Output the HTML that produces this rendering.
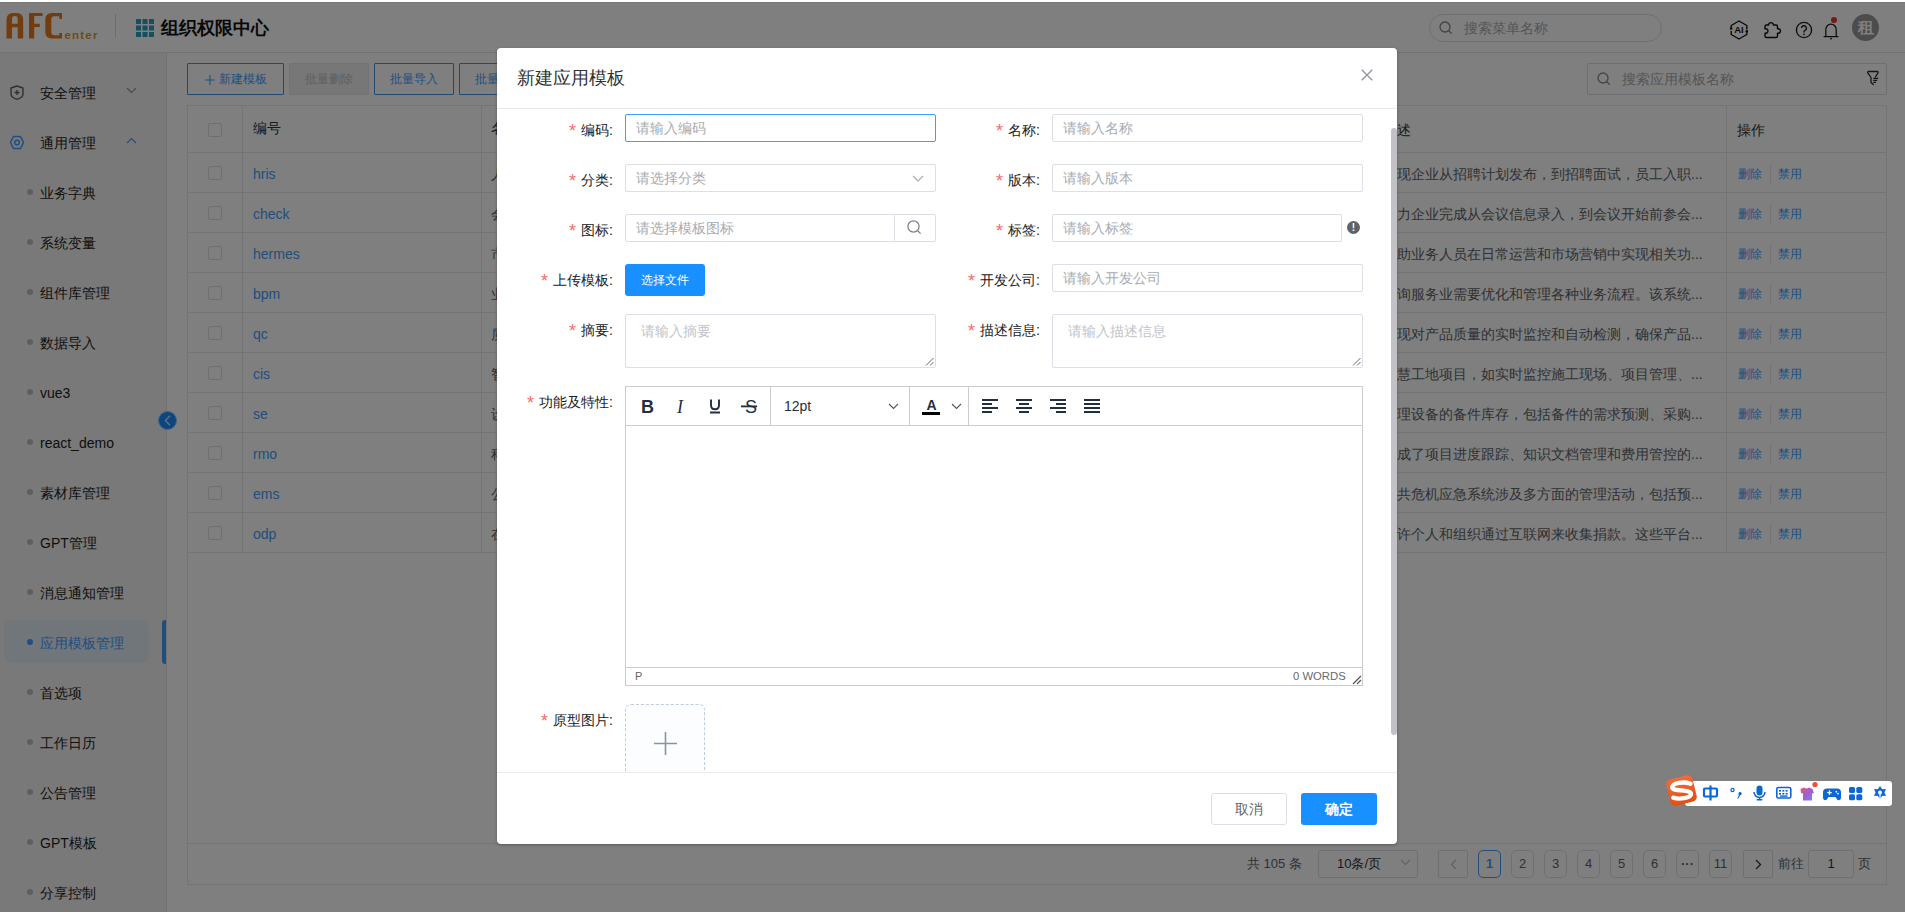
<!DOCTYPE html>
<html><head><meta charset="utf-8">
<style>
*{box-sizing:border-box;margin:0;padding:0}
html,body{width:1905px;height:912px;overflow:hidden;background:#fff}
body{position:relative;font-family:"Liberation Sans",sans-serif;font-size:14px;color:#303133}
.a{position:absolute}
.t{position:absolute;white-space:nowrap;line-height:20px}
.hdr{left:0;top:2px;width:1905px;height:51px;background:#fff;border-top:1px solid #f0f0f0;border-bottom:1px solid #e4e4e4}
.side{left:0;top:53px;width:167px;height:859px;background:#f3f3f3;border-right:1px solid #e0e0e0}
.content{left:167px;top:53px;width:1738px;height:859px;background:#fff}
.btn-o{position:absolute;height:32px;border:1px solid #3a96f2;border-radius:1px;color:#409eff;font-size:12px;line-height:30px;text-align:center;background:#fff}
.sub{position:absolute;left:40px;font-size:14px;line-height:20px;color:#1d1e20;white-space:nowrap}
.dot{position:absolute;left:27px;width:6px;height:6px;border-radius:50%;background:#b8bcc2}
.tbl{left:187px;top:105px;width:1700px;height:739px;border:1px solid #e8e8e8;border-bottom:none}
.row{position:absolute;left:187px;width:1700px;height:40px;border-bottom:1px solid #e8e8e8;border-left:1px solid #e8e8e8;border-right:1px solid #e8e8e8}
.cb{position:absolute;left:208px;width:14px;height:14px;border:1px solid #dcdfe6;border-radius:2px;background:#fff}
.code{position:absolute;left:253px;color:#409eff;font-size:14px;line-height:20px;white-space:nowrap}
.nm{position:absolute;left:491px;color:#606266;font-size:14px;line-height:20px;white-space:nowrap}
.desc{position:absolute;left:1397px;color:#606266;font-size:14px;line-height:20px;white-space:nowrap}
.op{position:absolute;color:#409eff;font-size:12px;line-height:20px;white-space:nowrap}
.opd{position:absolute;left:1770px;width:1px;height:19px;background:#e8e8e8}
.pg{position:absolute;top:850px;height:28px;width:23px;border:1px solid #dcdfe6;border-radius:5px;text-align:center;line-height:26px;font-size:13px;color:#606266;background:#fff}
.mask{left:0;top:2px;width:1905px;height:910px;background:rgba(0,0,0,.5)}

.lbl{position:absolute;height:32px;line-height:32px;text-align:right;font-size:14px;color:#202124;white-space:nowrap}
.lbl i{font-style:normal;color:#f56c6c;margin-right:4px;display:inline-block;font-size:18px;vertical-align:top;height:32px;line-height:32px;position:relative;top:1px;left:-1px}
.inp{position:absolute;height:28px;border:1px solid #dcdfe6;border-radius:2px;background:#fff}
.inp span{position:absolute;left:10px;top:3px;line-height:20px;font-size:14px;color:#a8abb2;white-space:nowrap}
.ta{position:absolute;height:54px;border:1px solid #dcdfe6;border-radius:2px;background:#fff}
.ta span{position:absolute;left:15px;top:6px;line-height:20px;font-size:14px;color:#c0c4cc;white-space:nowrap}
</style></head><body>

<!-- ===== HEADER ===== -->
<div class="a hdr"></div>
<svg class="a" style="left:0;top:0" width="110" height="50" viewBox="0 0 110 50">
  <path d="M6.5 38.5V20Q6.5 13 13 13H16.7Q23.2 13 23.2 20V38.5H17.7V27.2H12V38.5Z M12 23.8H17.7V19.2Q17.7 16 14.85 16Q12 16 12 19.2Z" fill="#e7791c" fill-rule="evenodd"/>
  <path d="M29 38.5V13H42.6V15.9H34.2V23.8H39.8V27H34.2V38.5Z" fill="#e7791c"/>
  <path d="M62 13V19H59.3V16.3H54.5Q51.3 16.3 51.3 19.5V32Q51.3 35.2 54.5 35.2H59.3V33H62V38.5H52Q45.3 38.5 45.3 31.8V19.7Q45.3 13 52 13Z" fill="#e7791c"/>
  <text x="64.5" y="38.5" font-family="Liberation Sans" font-weight="bold" font-size="11.5" fill="#d89a1e" letter-spacing="1.2">enter</text>
</svg>
<div class="a" style="left:115px;top:14px;width:1px;height:23px;background:#d9d9d9"></div>
<svg class="a" style="left:136px;top:19px" width="18" height="18">
  <g fill="#2a9fc0">
  <rect x="0" y="0" width="5" height="5"/><rect x="6.5" y="0" width="5" height="5"/><rect x="13" y="0" width="5" height="5"/>
  <rect x="0" y="6.5" width="5" height="5"/><rect x="6.5" y="6.5" width="5" height="5"/><rect x="13" y="6.5" width="5" height="5"/>
  <rect x="0" y="13" width="5" height="5"/><rect x="6.5" y="13" width="5" height="5"/><rect x="13" y="13" width="5" height="5"/>
  </g>
</svg>
<div class="t" style="left:161px;top:17.5px;font-size:18px;font-weight:bold;color:#111">组织权限中心</div>

<div class="a" style="left:1429px;top:14px;width:233px;height:28px;border:1px solid #dcdfe6;border-radius:14px;background:#fff"></div>
<svg class="a" style="left:1439px;top:21px" width="14" height="14" viewBox="0 0 14 14"><circle cx="6" cy="6" r="5" fill="none" stroke="#888" stroke-width="1.3"/><path d="M9.7 9.7L12.6 12.6" stroke="#888" stroke-width="1.4"/></svg>
<div class="t" style="left:1464px;top:18px;color:#a8abb2">搜索菜单名称</div>

<svg class="a" style="left:1729px;top:20px" width="20" height="20" viewBox="0 0 20 20">
  <path d="M2.2 8.5V5.5L10 1L17.8 5.5V9.5M17.8 12.5V14.5L10 19L2.2 14.5V11" fill="none" stroke="#111" stroke-width="1.4" stroke-linejoin="round"/>
  <circle cx="2.2" cy="8.6" r="1.3" fill="#111"/><circle cx="17.8" cy="11.4" r="1.3" fill="#111"/>
  <text x="10" y="13.2" text-anchor="middle" font-family="Liberation Sans" font-weight="bold" font-size="9.5" fill="#111">AI</text>
</svg>
<svg class="a" style="left:1762px;top:18px" width="22" height="22" viewBox="0 0 22 22">
  <path d="M3 8.5Q3 7 4.5 7H6.6A2.4 2.4 0 1 1 11.4 7H14Q15.5 7 15.5 8.5V10.8A2.3 2.3 0 1 1 15.5 15.2V18Q15.5 19.5 14 19.5H4.5Q3 19.5 3 18V15.2A2.3 2.3 0 1 0 3 10.8Z" fill="none" stroke="#111" stroke-width="1.4" stroke-linejoin="round"/>
</svg>
<svg class="a" style="left:1795px;top:21px" width="18" height="18" viewBox="0 0 18 18">
  <circle cx="9" cy="9" r="7.6" fill="none" stroke="#222" stroke-width="1.4"/>
  <path d="M6.6 7.1a2.4 2.4 0 1 1 3.4 2.2c-.7.35-1 .8-1 1.5v.6" fill="none" stroke="#222" stroke-width="1.4"/>
  <circle cx="9" cy="13.3" r=".9" fill="#222"/>
</svg>
<svg class="a" style="left:1822px;top:20px;overflow:visible" width="18" height="20" viewBox="0 0 18 20">
  <path d="M3.8 16.6V9.4a5.2 5.2 0 0 1 10.4 0V16.6" fill="none" stroke="#111" stroke-width="1.2"/>
  <path d="M1.6 16.6H16.4" stroke="#111" stroke-width="1.2"/>
  <circle cx="9" cy="18.6" r=".9" fill="#111"/>
  <circle cx="12" cy="0" r="3" fill="#e53935"/>
</svg>
<div class="a" style="left:1852px;top:14px;width:27px;height:27px;border-radius:50%;background:#999;color:#fff;font-family:'Liberation Serif',serif;font-size:16px;font-weight:bold;line-height:27px;text-align:center">租</div>

<!-- ===== SIDEBAR ===== -->
<div class="a side"></div>
<svg class="a" style="left:10px;top:85px" width="14" height="15" viewBox="0 0 14 15">
  <path d="M7 1L13 3V9Q13 12.5 7 14.3Q1 12.5 1 9V3Z" fill="none" stroke="#606266" stroke-width="1.4" stroke-linejoin="round"/>
  <path d="M7 5V10M4.5 7.5H9.5" stroke="#606266" stroke-width="1.4"/>
</svg>
<div class="sub" style="top:83px">安全管理</div>
<svg class="a" style="left:126px;top:87px" width="11" height="7" viewBox="0 0 11 7"><path d="M1 1L5.5 5.5L10 1" fill="none" stroke="#909399" stroke-width="1.2"/></svg>
<svg class="a" style="left:10px;top:135px" width="14" height="15" viewBox="0 0 14 15">
  <path d="M3.5 1.5H10.5L13.5 7.5L10.5 13.5H3.5L0.5 7.5Z" fill="none" stroke="#409eff" stroke-width="1.5" stroke-linejoin="round"/>
  <circle cx="7" cy="7.5" r="2.3" fill="none" stroke="#409eff" stroke-width="1.5"/>
</svg>
<div class="sub" style="top:133px">通用管理</div>
<svg class="a" style="left:126px;top:137px" width="11" height="7" viewBox="0 0 11 7"><path d="M1 6L5.5 1.5L10 6" fill="none" stroke="#409eff" stroke-width="1.2"/></svg>

<div class="dot" style="top:189px"></div><div class="sub" style="top:183px">业务字典</div>
<div class="dot" style="top:239px"></div><div class="sub" style="top:233px">系统变量</div>
<div class="dot" style="top:289px"></div><div class="sub" style="top:283px">组件库管理</div>
<div class="dot" style="top:339px"></div><div class="sub" style="top:333px">数据导入</div>
<div class="dot" style="top:389px"></div><div class="sub" style="top:383px">vue3</div>
<div class="dot" style="top:439px"></div><div class="sub" style="top:433px">react_demo</div>
<div class="dot" style="top:489px"></div><div class="sub" style="top:483px">素材库管理</div>
<div class="dot" style="top:539px"></div><div class="sub" style="top:533px">GPT管理</div>
<div class="dot" style="top:589px"></div><div class="sub" style="top:583px">消息通知管理</div>
<div class="a" style="left:4px;top:620px;width:145px;height:43px;border-radius:6px;background:#e3ecf7"></div>
<div class="dot" style="top:639px;background:#409eff"></div><div class="sub" style="top:633px;color:#409eff">应用模板管理</div>
<div class="a" style="left:162px;top:620px;width:4px;height:44px;border-radius:3px 0 0 3px;background:#409eff"></div>
<div class="dot" style="top:689px"></div><div class="sub" style="top:683px">首选项</div>
<div class="dot" style="top:739px"></div><div class="sub" style="top:733px">工作日历</div>
<div class="dot" style="top:789px"></div><div class="sub" style="top:783px">公告管理</div>
<div class="dot" style="top:839px"></div><div class="sub" style="top:833px">GPT模板</div>
<div class="dot" style="top:889px"></div><div class="sub" style="top:883px">分享控制</div>

<!-- ===== CONTENT ===== -->
<div class="a content"></div>
<div class="btn-o" style="left:187px;top:63px;width:97px;padding-left:14px">新建模板<svg class="a" style="left:17px;top:11px" width="10" height="10" viewBox="0 0 10 10"><path d="M5 0V10M0 5H10" stroke="#409eff" stroke-width="1.1"/></svg></div>
<div class="a" style="left:289px;top:63px;width:80px;height:32px;border-radius:1px;background:#eeeeee;border:1px solid #e6e6e6;color:#bdbdbd;font-size:12px;line-height:30px;text-align:center">批量删除</div>
<div class="btn-o" style="left:374px;top:63px;width:80px">批量导入</div>
<div class="btn-o" style="left:459px;top:63px;width:80px">批量导出</div>

<div class="a" style="left:1587px;top:63px;width:300px;height:32px;border:1px solid #dcdfe6;border-radius:2px;background:#fff"></div>
<svg class="a" style="left:1597px;top:72px" width="14" height="14" viewBox="0 0 14 14"><circle cx="6" cy="6" r="5" fill="none" stroke="#888" stroke-width="1.3"/><path d="M9.7 9.7L12.6 12.6" stroke="#888" stroke-width="1.4"/></svg>
<div class="t" style="left:1622px;top:69px;color:#a8abb2">搜索应用模板名称</div>
<svg class="a" style="left:1866px;top:70px" width="14" height="16" viewBox="0 0 14 16"><path d="M5 12.5V7.5L1.8 2.8Q1.3 1.5 2.6 1.5H11.2Q12.5 1.5 12 2.8L9.4 7M5 12.5L7.3 14.6" fill="none" stroke="#2a2a2a" stroke-width="1.3" stroke-linejoin="round" stroke-linecap="round"/><path d="M7.3 8.4H12.3M7.3 10.4H11.2M7.3 12.4H10" stroke="#2a2a2a" stroke-width="1.2"/></svg>

<div class="a tbl"></div>
<div class="row" style="top:105px;height:48px;border-top:1px solid #e8e8e8;border-right:1px solid #e8e8e8;border-left:1px solid #e8e8e8"></div>
<div class="a" style="left:242px;top:105px;width:1px;height:448px;background:#e8e8e8"></div>
<div class="a" style="left:481px;top:105px;width:1px;height:448px;background:#e8e8e8"></div>
<div class="a" style="left:1726px;top:105px;width:1px;height:448px;background:#e8e8e8"></div>
<div class="cb" style="top:123px"></div>
<div class="t" style="left:253px;top:118px;color:#303133">编号</div>
<div class="t" style="left:491px;top:118px;color:#303133">名称</div>
<div class="t" style="left:1737px;top:120px;color:#303133">操作</div>
<div class="t" style="left:1383px;top:120px;color:#303133">描述</div>

<div class="row" style="top:153px"></div>
<div class="cb" style="top:166px"></div>
<div class="code" style="top:164px">hris</div>
<div class="nm" style="top:164px">人力资源</div>
<div class="desc" style="top:164px">现企业从招聘计划发布，到招聘面试，员工入职...</div>
<div class="op" style="left:1738px;top:164px">删除</div><div class="opd" style="top:164px"></div><div class="op" style="left:1778px;top:164px">禁用</div>
<div class="row" style="top:193px"></div>
<div class="cb" style="top:206px"></div>
<div class="code" style="top:204px">check</div>
<div class="nm" style="top:204px">会议管理</div>
<div class="desc" style="top:204px">力企业完成从会议信息录入，到会议开始前参会...</div>
<div class="op" style="left:1738px;top:204px">删除</div><div class="opd" style="top:204px"></div><div class="op" style="left:1778px;top:204px">禁用</div>
<div class="row" style="top:233px"></div>
<div class="cb" style="top:246px"></div>
<div class="code" style="top:244px">hermes</div>
<div class="nm" style="top:244px">市场营销</div>
<div class="desc" style="top:244px">助业务人员在日常运营和市场营销中实现相关功...</div>
<div class="op" style="left:1738px;top:244px">删除</div><div class="opd" style="top:244px"></div><div class="op" style="left:1778px;top:244px">禁用</div>
<div class="row" style="top:273px"></div>
<div class="cb" style="top:286px"></div>
<div class="code" style="top:284px">bpm</div>
<div class="nm" style="top:284px">业务流程</div>
<div class="desc" style="top:284px">询服务业需要优化和管理各种业务流程。该系统...</div>
<div class="op" style="left:1738px;top:284px">删除</div><div class="opd" style="top:284px"></div><div class="op" style="left:1778px;top:284px">禁用</div>
<div class="row" style="top:313px"></div>
<div class="cb" style="top:326px"></div>
<div class="code" style="top:324px">qc</div>
<div class="nm" style="top:324px">质量管理</div>
<div class="desc" style="top:324px">现对产品质量的实时监控和自动检测，确保产品...</div>
<div class="op" style="left:1738px;top:324px">删除</div><div class="opd" style="top:324px"></div><div class="op" style="left:1778px;top:324px">禁用</div>
<div class="row" style="top:353px"></div>
<div class="cb" style="top:366px"></div>
<div class="code" style="top:364px">cis</div>
<div class="nm" style="top:364px">智慧工地</div>
<div class="desc" style="top:364px">慧工地项目，如实时监控施工现场、项目管理、...</div>
<div class="op" style="left:1738px;top:364px">删除</div><div class="opd" style="top:364px"></div><div class="op" style="left:1778px;top:364px">禁用</div>
<div class="row" style="top:393px"></div>
<div class="cb" style="top:406px"></div>
<div class="code" style="top:404px">se</div>
<div class="nm" style="top:404px">设备备件</div>
<div class="desc" style="top:404px">理设备的备件库存，包括备件的需求预测、采购...</div>
<div class="op" style="left:1738px;top:404px">删除</div><div class="opd" style="top:404px"></div><div class="op" style="left:1778px;top:404px">禁用</div>
<div class="row" style="top:433px"></div>
<div class="cb" style="top:446px"></div>
<div class="code" style="top:444px">rmo</div>
<div class="nm" style="top:444px">科研项目</div>
<div class="desc" style="top:444px">成了项目进度跟踪、知识文档管理和费用管控的...</div>
<div class="op" style="left:1738px;top:444px">删除</div><div class="opd" style="top:444px"></div><div class="op" style="left:1778px;top:444px">禁用</div>
<div class="row" style="top:473px"></div>
<div class="cb" style="top:486px"></div>
<div class="code" style="top:484px">ems</div>
<div class="nm" style="top:484px">公共应急</div>
<div class="desc" style="top:484px">共危机应急系统涉及多方面的管理活动，包括预...</div>
<div class="op" style="left:1738px;top:484px">删除</div><div class="opd" style="top:484px"></div><div class="op" style="left:1778px;top:484px">禁用</div>
<div class="row" style="top:513px"></div>
<div class="cb" style="top:526px"></div>
<div class="code" style="top:524px">odp</div>
<div class="nm" style="top:524px">在线募捐</div>
<div class="desc" style="top:524px">许个人和组织通过互联网来收集捐款。这些平台...</div>
<div class="op" style="left:1738px;top:524px">删除</div><div class="opd" style="top:524px"></div><div class="op" style="left:1778px;top:524px">禁用</div>

<div class="a" style="left:187px;top:843px;width:1700px;height:42px;border:1px solid #e8e8e8;background:#fff"></div>
<div class="t" style="left:1247px;top:854px;font-size:13px;color:#606266">共 105 条</div>
<div class="a" style="left:1318px;top:850px;width:100px;height:28px;border:1px solid #dcdfe6;border-radius:3px;background:#fff"></div>
<div class="t" style="left:1337px;top:854px;font-size:13px;color:#303133">10条/页</div>
<svg class="a" style="left:1400px;top:859px" width="11" height="7" viewBox="0 0 11 7"><path d="M1 1L5.5 5.5L10 1" fill="none" stroke="#c0c4cc" stroke-width="1.2"/></svg>
<div class="pg" style="left:1438px;width:30px;border-radius:2px"><svg class="a" style="left:11px;top:8px" width="7" height="11" viewBox="0 0 7 11"><path d="M6 1L1.5 5.5L6 10" fill="none" stroke="#c0c4cc" stroke-width="1.3"/></svg></div>
<div class="pg" style="left:1478px;border-color:#409eff;color:#409eff;font-weight:bold">1</div>
<div class="pg" style="left:1511px">2</div>
<div class="pg" style="left:1544px">3</div>
<div class="pg" style="left:1577px">4</div>
<div class="pg" style="left:1610px">5</div>
<div class="pg" style="left:1643px">6</div>
<div class="pg" style="left:1676px;font-weight:bold">···</div>
<div class="pg" style="left:1709px">11</div>
<div class="pg" style="left:1743px;width:30px;border-radius:2px"><svg class="a" style="left:11px;top:8px" width="7" height="11" viewBox="0 0 7 11"><path d="M1 1L5.5 5.5L1 10" fill="none" stroke="#303133" stroke-width="1.3"/></svg></div>
<div class="t" style="left:1778px;top:854px;font-size:13px;color:#606266">前往</div>
<div class="a" style="left:1808px;top:850px;width:46px;height:28px;border:1px solid #dcdfe6;border-radius:3px;background:#fff;text-align:center;line-height:26px;font-size:13px;color:#303133">1</div>
<div class="t" style="left:1858px;top:854px;font-size:13px;color:#606266">页</div>

<div class="a" style="left:158px;top:411px;width:19px;height:19px;border-radius:50%;background:#1a8cff;border:1px solid #8cc4ff"></div>
<svg class="a" style="left:162.5px;top:413.5px" width="10" height="13" viewBox="0 0 10 13"><path d="M7 1.8L2.4 6.5L7 11.2" fill="none" stroke="#bcdcff" stroke-width="1.5"/></svg>
<!-- ===== MASK ===== -->
<div class="a mask"></div>

<!-- ===== MODAL ===== -->

<div class="a" style="left:497px;top:48px;width:900px;height:796px;background:#fff;border-radius:4px;box-shadow:0 1px 3px rgba(0,0,0,.3)">
  <div class="t" style="left:20px;top:17.5px;font-size:18px;line-height:24px;color:#303133">新建应用模板</div>
  <svg class="a" style="left:864px;top:21px" width="12" height="12" viewBox="0 0 12 12"><path d="M0.7 0.7L11.3 11.3M11.3 0.7L0.7 11.3" stroke="#909399" stroke-width="1.3"/></svg>
  <div class="a" style="left:0;top:60px;width:900px;height:1px;background:#e8e8e8"></div>

  <div class="a" id="mbody" style="left:0;top:61px;width:900px;height:663px;overflow:hidden">
    <!-- coordinates inside body: x-497, y-109 -->
    <!-- row1 -->
    <div class="lbl" style="left:0;top:5px;width:116px"><i>*</i>编码:</div>
    <div class="inp" style="left:128px;top:5px;width:311px;border-color:#409eff"><span>请输入编码</span></div>
    <div class="lbl" style="left:427px;top:5px;width:116px"><i>*</i>名称:</div>
    <div class="inp" style="left:555px;top:5px;width:311px"><span>请输入名称</span></div>
    <!-- row2 -->
    <div class="lbl" style="left:0;top:55px;width:116px"><i>*</i>分类:</div>
    <div class="inp" style="left:128px;top:55px;width:311px"><span>请选择分类</span></div>
    <svg class="a" style="left:415px;top:66px" width="12" height="7" viewBox="0 0 12 7"><path d="M1 1L6 6L11 1" fill="none" stroke="#a8abb2" stroke-width="1.2"/></svg>
    <div class="lbl" style="left:427px;top:55px;width:116px"><i>*</i>版本:</div>
    <div class="inp" style="left:555px;top:55px;width:311px"><span>请输入版本</span></div>
    <!-- row3 -->
    <div class="lbl" style="left:0;top:105px;width:116px"><i>*</i>图标:</div>
    <div class="inp" style="left:128px;top:105px;width:311px"><span>请选择模板图标</span></div>
    <div class="a" style="left:397px;top:105px;width:1px;height:28px;background:#dcdfe6"></div>
    <svg class="a" style="left:410px;top:111px" width="15" height="15" viewBox="0 0 15 15"><circle cx="6.5" cy="6.5" r="5.6" fill="none" stroke="#7a7d84" stroke-width="1.2"/><path d="M10.6 10.6L13.6 13.6" stroke="#7a7d84" stroke-width="1.3"/></svg>
    <div class="lbl" style="left:427px;top:105px;width:116px"><i>*</i>标签:</div>
    <div class="inp" style="left:555px;top:105px;width:290px"><span>请输入标签</span></div>
    <div class="a" style="left:850px;top:112px;width:13px;height:13px;border-radius:50%;background:#606266;color:#fff;font-size:10px;font-weight:bold;line-height:13px;text-align:center">!</div>
    <!-- row4 -->
    <div class="lbl" style="left:0;top:155px;width:116px"><i>*</i>上传模板:</div>
    <div class="a" style="left:128px;top:155px;width:80px;height:32px;border-radius:3px;background:#1890ff;color:#fff;font-size:12px;line-height:32px;text-align:center">选择文件</div>
    <div class="lbl" style="left:427px;top:155px;width:116px"><i>*</i>开发公司:</div>
    <div class="inp" style="left:555px;top:155px;width:311px"><span>请输入开发公司</span></div>
    <!-- row5 -->
    <div class="lbl" style="left:0;top:205px;width:116px"><i>*</i>摘要:</div>
    <div class="ta" style="left:128px;top:205px;width:311px"><span>请输入摘要</span><svg class="a" style="right:1px;bottom:1px" width="9" height="9" viewBox="0 0 9 9"><path d="M1 8.5L8.5 1M5 8.5L8.5 5" stroke="#666" stroke-width="1"/></svg></div>
    <div class="lbl" style="left:427px;top:205px;width:116px"><i>*</i>描述信息:</div>
    <div class="ta" style="left:555px;top:205px;width:311px"><span>请输入描述信息</span><svg class="a" style="right:1px;bottom:1px" width="9" height="9" viewBox="0 0 9 9"><path d="M1 8.5L8.5 1M5 8.5L8.5 5" stroke="#666" stroke-width="1"/></svg></div>
    <!-- editor -->
    <div class="lbl" style="left:0;top:277px;width:116px"><i>*</i>功能及特性:</div>
    <div class="a" style="left:128px;top:277px;width:738px;height:300px;border:1px solid #ccc"></div>
    <div class="a" style="left:129px;top:316px;width:736px;height:1px;background:#ccc"></div>
    <div class="a" style="left:129px;top:558px;width:736px;height:1px;background:#ccc"></div>
    <div class="a" style="left:273px;top:278px;width:1px;height:38px;background:#ccc"></div>
    <div class="a" style="left:412px;top:278px;width:1px;height:38px;background:#ccc"></div>
    <div class="a" style="left:471px;top:278px;width:1px;height:38px;background:#ccc"></div>
    
    <svg class="a" style="left:140px;top:288px;overflow:visible" width="130" height="20" viewBox="0 0 130 20">
      <text x="4" y="15.5" font-family="Liberation Sans" font-weight="bold" font-size="18" fill="#222f3e">B</text>
      <text x="40" y="16" font-family="Liberation Serif" font-style="italic" font-size="18" fill="#222f3e">I</text>
      <path d="M74 2.5V8.2Q74 12.2 78 12.2Q82 12.2 82 8.2V2.5" fill="none" stroke="#222f3e" stroke-width="1.9"/>
      <rect x="73" y="14.5" width="10" height="2" fill="#222f3e"/>
      <text x="108" y="16" font-family="Liberation Sans" font-size="18" fill="#222f3e">S</text>
      <rect x="104" y="8.5" width="16" height="1.8" fill="#222f3e"/>
    </svg>
    <div class="t" style="left:287px;top:287px;font-size:14px;color:#222f3e">12pt</div>
    <svg class="a" style="left:391px;top:294px" width="11" height="7" viewBox="0 0 11 7"><path d="M1 1L5.5 5.5L10 1" fill="none" stroke="#555" stroke-width="1.1"/></svg>
    <svg class="a" style="left:425px;top:290px" width="20" height="18" viewBox="0 0 20 18">
      <text x="4.5" y="11" font-family="Liberation Sans" font-weight="bold" font-size="14" fill="#222f3e">A</text>
      <rect x="0" y="13" width="18" height="3" fill="#000"/>
    </svg>
    <svg class="a" style="left:454px;top:294px" width="11" height="7" viewBox="0 0 11 7"><path d="M1 1L5.5 5.5L10 1" fill="none" stroke="#555" stroke-width="1.1"/></svg>
    <svg class="a" style="left:485px;top:290px" width="120" height="14" viewBox="0 0 120 14">
      <g fill="#222f3e">
      <rect x="0" y="0" width="16" height="2"/><rect x="0" y="4" width="10" height="2"/><rect x="0" y="8" width="16" height="2"/><rect x="0" y="12" width="10" height="2"/>
      <rect x="34" y="0" width="16" height="2"/><rect x="37" y="4" width="10" height="2"/><rect x="34" y="8" width="16" height="2"/><rect x="37" y="12" width="10" height="2"/>
      <rect x="68" y="0" width="16" height="2"/><rect x="74" y="4" width="10" height="2"/><rect x="68" y="8" width="16" height="2"/><rect x="74" y="12" width="10" height="2"/>
      <rect x="102" y="0" width="16" height="2"/><rect x="102" y="4" width="16" height="2"/><rect x="102" y="8" width="16" height="2"/><rect x="102" y="12" width="16" height="2"/>
      </g>
    </svg>

    <div class="t" style="left:138px;top:557px;font-size:11px;color:#666">P</div>
    <div class="t" style="left:796px;top:557px;font-size:11.3px;color:#6a6a6a">0 WORDS</div>
    <svg class="a" style="left:855px;top:566px" width="10" height="10" viewBox="0 0 10 10"><path d="M1 9L9 1M5 9L9 5" stroke="#555" stroke-width="1.2"/></svg>
    <!-- upload -->
    <div class="lbl" style="left:0;top:595px;width:116px"><i>*</i>原型图片:</div>
    <div class="a" style="left:128px;top:595px;width:80px;height:80px;border:1px dashed #c0ccda;border-radius:6px;background:#fbfdff"></div>
    <svg class="a" style="left:157px;top:623px" width="23" height="23" viewBox="0 0 23 23"><path d="M11.5 0V23M0 11.5H23" stroke="#8c939d" stroke-width="1.6"/></svg>
  </div>
  <div class="a" style="left:894px;top:80px;width:6px;height:607px;border-radius:3px;background:#c1c1c6"></div>

  <div class="a" style="left:0;top:724px;width:900px;height:1px;background:#ebebeb"></div>
  <div class="a" style="left:714px;top:745px;width:76px;height:32px;border:1px solid #dcdfe6;border-radius:3px;color:#606266;font-size:14px;line-height:30px;text-align:center">取消</div>
  <div class="a" style="left:804px;top:745px;width:76px;height:32px;border-radius:3px;background:#1890ff;color:#fff;font-size:14px;font-weight:bold;line-height:32px;text-align:center">确定</div>
</div>


<!-- ===== IME ===== -->

<div class="a" style="left:1685px;top:781px;width:207px;height:25px;background:#fff;border-radius:3px"></div>
<svg class="a" style="left:1664px;top:773px" width="36" height="36" viewBox="0 0 36 36">
  <defs><linearGradient id="og" x1="0" y1="0" x2="0" y2="1"><stop offset="0" stop-color="#f26b3a"/><stop offset="1" stop-color="#e54e12"/></linearGradient></defs>
  <rect x="4" y="4" width="27" height="27" rx="5" transform="rotate(-14 17.5 17.5)" fill="url(#og)"/>
  <path d="M26.5 10.8C20 8.2 8.2 9.8 8.2 14.6C8.2 18.8 27 15.6 27 21C27 25.2 15 26.6 9.2 24.6" fill="none" stroke="#fff" stroke-width="4.3" stroke-linecap="round"/>
</svg>
<svg class="a" style="left:1703px;top:785px;overflow:visible" width="190" height="18" viewBox="0 0 190 18">
  <g fill="#0b66d6">
    <!-- 中 -->
    <rect x="1" y="3.5" width="13" height="8" rx="1" fill="none" stroke="#0b66d6" stroke-width="2.2"/>
    <rect x="6.4" y="0.5" width="2.2" height="15"/>
    <!-- °, -->
    <circle cx="29.5" cy="5" r="1.6" fill="none" stroke="#0b66d6" stroke-width="1.3"/>
    <path d="M35.5 8.5a1.6 1.6 0 1 1 1.6 1.8L35.2 13.8l-.9-.4 1.4-3z"/>
    <!-- mic -->
    <rect x="53.5" y="0.5" width="6" height="10" rx="3"/>
    <path d="M51 7a5.5 5.5 0 0 0 11 0" fill="none" stroke="#0b66d6" stroke-width="1.5"/>
    <rect x="55.8" y="12" width="1.5" height="2.5"/><rect x="53.5" y="14" width="6" height="1.6" rx=".8"/>
    <!-- keyboard -->
    <rect x="73.8" y="2.5" width="14" height="10.5" rx="1.5" fill="none" stroke="#0b66d6" stroke-width="1.6"/>
    <rect x="76" y="5" width="2" height="1.6"/><rect x="79.3" y="5" width="2" height="1.6"/><rect x="82.6" y="5" width="2" height="1.6"/>
    <rect x="76" y="8" width="2" height="1.6"/><rect x="79.3" y="8" width="2" height="1.6"/><rect x="82.6" y="8" width="2" height="1.6"/>
    <rect x="77" y="10.4" width="7.5" height="1.4"/>
  </g>
  <defs><linearGradient id="sg" x1="0" y1="0" x2="1" y2="1"><stop offset="0" stop-color="#e95a5a"/><stop offset=".5" stop-color="#a35bd8"/><stop offset="1" stop-color="#6a8cf0"/></linearGradient></defs>
  <path d="M97.5 4L101 2.5Q103.5 4.5 106 2.5L109.5 4L111 8L109 8.5V15.5H100V8.5L98 8Z" fill="url(#sg)"/>
  <circle cx="112" cy="-0.5" r="2.6" fill="#ee4b3a"/>
  <g fill="#0b66d6">
    <!-- gamepad -->
    <path d="M124 3.5h10a4 4 0 0 1 4 4v5.5a2.2 2.2 0 0 1-4 1.2l-1.5-2.2h-7l-1.5 2.2a2.2 2.2 0 0 1-4-1.2V7.5a4 4 0 0 1 4-4z"/>
    <rect x="124.3" y="7" width="4.4" height="1.3" fill="#fff"/><rect x="125.85" y="5.45" width="1.3" height="4.4" fill="#fff"/>
    <circle cx="133.3" cy="6.7" r=".9" fill="#fff"/><circle cx="135" cy="8.6" r=".9" fill="#fff"/>
    <!-- 4 squares -->
    <rect x="146" y="2" width="6" height="6" rx="1.6"/><rect x="153.3" y="2" width="6" height="6" rx="1.6"/>
    <rect x="146" y="9.3" width="6" height="6" rx="1.6"/><rect x="153.3" y="9.3" width="6" height="6" rx="1.6"/>
    <!-- star gear -->
    <path d="M177 1l2.2 3.2 3.8-.2-1.6 3.5 1.6 3.5-3.8-.2L177 14l-2.2-3.2-3.8.2 1.6-3.5L171 4l3.8.2z"/>
    <circle cx="177" cy="7.5" r="2" fill="#fff"/>
    <rect x="176.4" y="8.5" width="1.2" height="5.5" fill="#fff"/>
  </g>
</svg>


</body></html>
